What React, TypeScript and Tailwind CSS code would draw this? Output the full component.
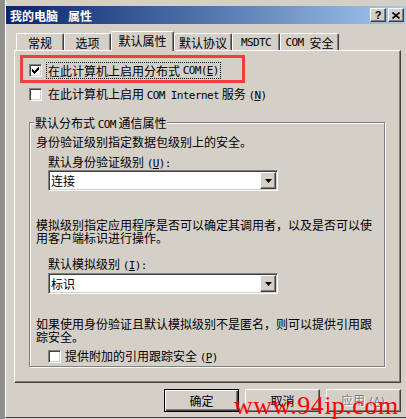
import React from "react"

const raised =
  "border border-t-white border-l-white border-r-[#404040] border-b-[#404040] shadow-[inset_-1px_-1px_0_#808080]"
const sunken =
  "border border-t-[#808080] border-l-[#808080] border-r-white border-b-white shadow-[inset_1px_1px_0_#404040,inset_-1px_-1px_0_#d4d0c8]"

function Latin({ children }: { children: React.ReactNode }) {
  return <span className="font-['DejaVu_Sans_Mono',monospace] text-[11px] tracking-[-0.6px]">{children}</span>
}

function Key({ k }: { k: string }) {
  return (
    <Latin>
      (<u>{k}</u>)
    </Latin>
  )
}

function Checkbox({ checked }: { checked?: boolean }) {
  const cols = [2, 3, 4, 3, 2, 1, 0]
  return (
    <div className={`w-[13px] h-[13px] shrink-0 bg-white flex items-center justify-center ${sunken}`}>
      {checked && (
        <svg width="7" height="7" viewBox="0 0 7 7">
          {cols.map((y, x) => (
            <rect key={x} x={x} y={y} width="1" height="3" fill="#000" />
          ))}
        </svg>
      )}
    </div>
  )
}

function Combo({ value }: { value: string }) {
  return (
    <div className={`ml-[12px] w-[230px] h-[21px] bg-white flex items-center p-[1px] ${sunken}`}>
      <span className="flex-1 pl-[1px] leading-[13px]">{value}</span>
      <div className={`w-[16px] h-[17px] bg-[#d4d0c8] flex items-center justify-center ${raised}`}>
        <svg width="7" height="4" viewBox="0 0 7 4">
          <path d="M0 0h7L3.5 4z" fill="#000" />
        </svg>
      </div>
    </div>
  )
}

function Tab({ w, active, children }: { w: string; active?: boolean; children: React.ReactNode }) {
  return (
    <div
      className={`${w} ${
        active ? "h-[20px] pb-[2px] z-10" : "h-[17px] mb-[1px]"
      } bg-[#d4d0c8] flex items-center justify-center rounded-t-[2px] border-l border-t border-white border-r border-r-[#404040] shadow-[inset_-1px_0_0_#808080] leading-[13px]`}
    >
      {children}
    </div>
  )
}

function Button({ children, primary }: { children: React.ReactNode; primary?: boolean }) {
  return (
    <div
      className={`w-[75px] h-[23px] flex items-center justify-center leading-[13px] ${
        primary
          ? "border border-black shadow-[inset_1px_1px_0_#fff,inset_-1px_-1px_0_#404040,inset_-2px_-2px_0_#808080]"
          : raised
      }`}
    >
      {children}
    </div>
  )
}

export default function App() {
  return (
    <div className="w-[406px] h-[419px] flex bg-[#d4d0c8] overflow-hidden relative font-['Noto_Sans_CJK_SC',sans-serif] text-[12px] text-black">
      <div className="w-[5px] bg-[#8e8e8e]" />
      <div className="flex-1 h-[418px] flex flex-col border-l border-white border-b border-b-[#404040]">
        <div className="h-[6px]" />
        {/* title bar */}
        <div className="h-[18px] flex items-center bg-linear-to-r from-[#0a246a] to-[#a6caf0] pl-[4px] pr-[2px]">
          <span className="text-white font-bold leading-[13px] flex gap-[10px]">
            <span>我的电脑</span>
            <span>属性</span>
          </span>
          <div className="ml-auto flex gap-[2px]">
            <div className={`w-[16px] h-[14px] bg-[#d4d0c8] flex items-center justify-center ${raised}`}>
              <span className="font-['Liberation_Sans',sans-serif] font-bold text-[11px] leading-none">?</span>
            </div>
            <div className={`w-[16px] h-[14px] bg-[#d4d0c8] flex items-center justify-center ${raised}`}>
              <svg width="8" height="7" viewBox="0 0 8 7">
                <path d="M0.5 0.5l7 6M7.5 0.5l-7 6" stroke="#000" strokeWidth="1.6" />
              </svg>
            </div>
          </div>
        </div>

        {/* tabs */}
        <div className="mt-[7px] h-[20px] pl-[10px] flex items-end relative z-10">
          <Tab w="w-[48px]">常规</Tab>
          <Tab w="w-[47px]">选项</Tab>
          <Tab w="w-[63px]" active>
            默认属性
          </Tab>
          <Tab w="w-[58px]">默认协议</Tab>
          <Tab w="w-[48px]">
            <Latin>MSDTC</Latin>
          </Tab>
          <Tab w="w-[59px]">
            <span className="flex gap-[6px] items-center">
              <Latin>COM</Latin>
              <span>安全</span>
            </span>
          </Tab>
        </div>

        {/* panel */}
        <div className="-mt-[1px] ml-[8px] w-[387px] h-[333px] relative border-l border-t border-white border-r border-b border-r-[#404040] border-b-[#404040] shadow-[inset_-1px_-1px_0_#808080]">
          <div className="absolute left-[5px] top-[4px] w-[225px] h-[28px] border-[3px] border-[#ef3e3e]" />

          <div className="mt-[11px] ml-[14px] h-[17px] flex items-center gap-[4px]">
            <Checkbox checked />
            <span className="h-[17px] px-[1px] flex items-center border border-dotted border-black leading-[13px]">
              在此计算机上启用分布式&nbsp;<Latin>COM</Latin>
              <Key k="E" />
            </span>
          </div>
          <div className="mt-[7px] ml-[14px] h-[17px] flex items-center gap-[6px]">
            <Checkbox />
            <span className="leading-[13px] whitespace-nowrap">
              在此计算机上启用 <Latin>COM Internet</Latin> 服务 <Key k="N" />
            </span>
          </div>

          {/* group box */}
          <div className="mt-[19px] ml-[14px] w-[356px] h-[245px] relative border border-[#808080] shadow-[inset_1px_1px_0_#fff,1px_1px_0_#fff] pt-[12px] pl-[6px] leading-[13px] whitespace-nowrap">
            <div className="absolute left-[4px] -top-[7px] px-[1px] bg-[#d4d0c8] leading-[13px]">
              默认分布式 <Latin>COM</Latin> 通信属性
            </div>
            <div>身份验证级别指定数据包级别上的安全。</div>
            <div className="mt-[7px] ml-[12px]">
              默认身份验证级别 <Key k="U" />
              <Latin>:</Latin>
            </div>
            <Combo value="连接" />
            <div className="mt-[27px]">
              模拟级别指定应用程序是否可以确定其调用者，以及是否可以使
              <br />
              用客户端标识进行操作。
            </div>
            <div className="mt-[13px] ml-[12px]">
              默认模拟级别 <Key k="I" />
              <Latin>:</Latin>
            </div>
            <div className="mt-[1px]">
              <Combo value="标识" />
            </div>
            <div className="mt-[23px]">
              如果使用身份验证且默认模拟级别不是匿名，则可以提供引用跟
              <br />
              踪安全。
            </div>
            <div className="mt-[6px] ml-[12px] flex items-center gap-[4px]">
              <Checkbox />
              <span>
                提供附加的引用跟踪安全 <Key k="P" />
              </span>
            </div>
          </div>
        </div>

        {/* buttons */}
        <div className="mt-[6px] pr-[5px] flex justify-end gap-[6px]">
          <Button primary>确定</Button>
          <Button>取消</Button>
          <Button>
            <span className="text-[#808080] [text-shadow:1px_1px_0_#fff]">
              应用 <Key k="A" />
            </span>
          </Button>
        </div>
      </div>

      <div className="absolute left-[234px] top-[393px] font-['Liberation_Serif',serif] text-[26px] leading-none tracking-[0.5px] text-[#ff0000] whitespace-nowrap">
        www.94ip.com
      </div>
    </div>
  )
}
